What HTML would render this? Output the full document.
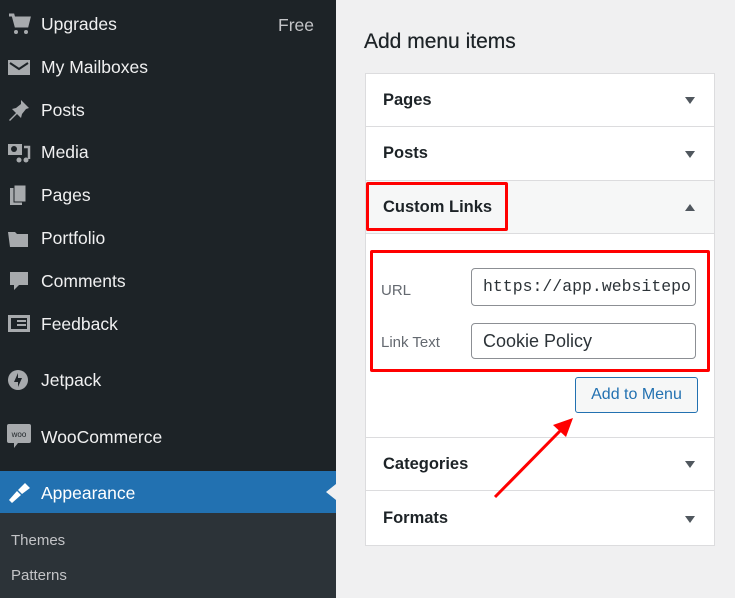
<!DOCTYPE html>
<html><head><meta charset="utf-8"><style>
*{margin:0;padding:0;box-sizing:border-box}
body{width:735px;height:598px;overflow:hidden;background:#f0f0f1;font-family:"Liberation Sans",sans-serif;position:relative}
#side{position:absolute;left:0;top:0;width:336px;height:598px;background:#1d2327}
.it{position:absolute;left:41px;color:#f0f0f1;font-size:17.5px;line-height:20px}
.ic{position:absolute;left:7px;width:24px;height:22px}
#app{position:absolute;left:0;top:471px;width:336px;height:42px;background:#2271b1}
#sub{position:absolute;left:0;top:513px;width:336px;height:85px;background:#2c3338}
.sb{position:absolute;left:11px;color:#c3c4c7;font-size:15px}
h2{position:absolute;left:364px;top:30px;font-size:21px;font-weight:normal;color:#1d2327;text-shadow:0 0 0.4px #1d2327}
#panel{position:absolute;left:365px;top:73px;width:350px;height:473px;background:#fff;border:1px solid #dcdcde}
.row{position:absolute;left:0;width:348px;border-bottom:1px solid #dcdcde;font-size:16.5px;font-weight:bold;color:#1d2327;padding-left:17px}
.row span.ar{position:absolute;right:19px;top:50%;margin-top:-3px;border-left:5px solid transparent;border-right:5px solid transparent;border-top:7px solid #50575e}
.lbl{position:absolute;left:381px;font-size:15px;color:#646970}
.inp{position:absolute;left:471px;width:225px;border:1px solid #8c8f94;border-radius:4px;background:#fff;padding-left:11px;font-size:18px;color:#2c3338}
.red{position:absolute;border:3px solid #f00;border-radius:2px}
</style></head><body>
<div id="side">
<svg class="ic" style="top:13px" viewBox="0 0 24 22"><path d="M2 2h4l3 11h11l2-8H7" fill="none" stroke="#a7aaad" stroke-width="3"/><rect x="8" y="5" width="13" height="8" fill="#a7aaad"/><circle cx="9" cy="19" r="2" fill="#a7aaad"/><circle cx="19" cy="19" r="2" fill="#a7aaad"/></svg>
<div class="it" style="top:14px">Upgrades</div><div class="it" style="left:278px;top:15px;color:#c3c4c7">Free</div>
<svg class="ic" style="top:57px" viewBox="0 0 24 22"><rect x="1" y="3" width="22" height="15" fill="#a7aaad"/><path d="M3 6l9 6 9-6" fill="none" stroke="#1d2327" stroke-width="2"/></svg>
<div class="it" style="top:57px">My Mailboxes</div>
<svg class="ic" style="top:99px" viewBox="0 0 24 22"><path d="M14 1l8 8-3 1-4 5-1 4-4-4-7 7-1-1 7-7-4-4 4-1 5-4z" fill="#a7aaad"/></svg>
<div class="it" style="top:100px">Posts</div>
<svg class="ic" style="top:141px" viewBox="0 0 24 22"><rect x="1" y="3" width="14" height="11" fill="#a7aaad"/><circle cx="7" cy="8" r="3" fill="#1d2327"/><path d="M17 6h5v12" fill="none" stroke="#a7aaad" stroke-width="2.5"/><circle cx="19" cy="19" r="2.5" fill="#a7aaad"/><circle cx="12" cy="19" r="2.5" fill="#a7aaad"/></svg>
<div class="it" style="top:142px">Media</div>
<svg class="ic" style="top:184px" viewBox="0 0 24 22"><rect x="3" y="4" width="12" height="17" fill="#a7aaad"/><rect x="7" y="1" width="12" height="17" fill="#a7aaad" stroke="#1d2327"/></svg>
<div class="it" style="top:185px">Pages</div>
<svg class="ic" style="top:227px" viewBox="0 0 24 22"><path d="M1 5h7l2 2h11v13H3z" fill="#a7aaad"/></svg>
<div class="it" style="top:228px">Portfolio</div>
<svg class="ic" style="top:270px" viewBox="0 0 24 22"><path d="M3 2h18v13H12l-5 5v-5H3z" fill="#a7aaad"/></svg>
<div class="it" style="top:271px">Comments</div>
<svg class="ic" style="top:313px" viewBox="0 0 24 22"><rect x="1" y="2" width="22" height="17" fill="#a7aaad"/><rect x="4" y="5" width="16" height="11" fill="#1d2327"/><rect x="10" y="7" width="9" height="2" fill="#a7aaad"/><rect x="10" y="11" width="9" height="2" fill="#a7aaad"/></svg>
<div class="it" style="top:314px">Feedback</div>
<svg class="ic" style="top:369px" viewBox="0 0 24 22"><circle cx="11" cy="11" r="10" fill="#a7aaad"/><path d="M11 4l-4 9h4zM11 18l4-9h-4z" fill="#1d2327"/></svg>
<div class="it" style="top:370px">Jetpack</div>
<svg class="ic" style="top:424px;height:26px" viewBox="0 0 24 26"><rect x="0" y="0" width="24" height="19" rx="2" fill="#a7aaad"/><path d="M7 19v5l4-5z" fill="#a7aaad"/><text x="12" y="13" font-size="8" text-anchor="middle" fill="#1d2327" font-family="Liberation Sans">woo</text></svg>
<div class="it" style="top:427px">WooCommerce</div>
</div>
<div id="app"></div>
<svg class="ic" style="top:482px" viewBox="0 0 24 22"><path d="M2 18l8-9 4 4-9 8z M11 8l7-7 5 5-8 6z" fill="#fff"/></svg>
<div class="it" style="top:483px;color:#fff">Appearance</div>
<div style="position:absolute;left:326px;top:484px;border-top:8px solid transparent;border-bottom:8px solid transparent;border-right:10px solid #f0f0f1"></div>
<div id="sub"></div>
<div class="sb" style="top:532px">Themes</div>
<div class="sb" style="top:567px">Patterns</div>

<h2>Add menu items</h2>
<div id="panel">
<div class="row" style="top:0;height:53px;line-height:52px">Pages<span class="ar"></span></div>
<div class="row" style="top:53px;height:54px;line-height:53px">Posts<span class="ar"></span></div>
<div class="row" style="top:107px;height:53px;line-height:52px;background:#f6f7f7">Custom Links<span class="ar" style="border-top:0;border-bottom:7px solid #50575e"></span></div>
<div class="row" style="top:363px;height:54px;line-height:53px;border-top:1px solid #dcdcde">Categories<span class="ar"></span></div>
<div class="row" style="top:417px;height:55px;line-height:54px;border-bottom:0">Formats<span class="ar"></span></div>
</div>
<div class="lbl" style="top:282px">URL</div>
<div class="lbl" style="top:334px">Link Text</div>
<div class="inp" style="top:268px;height:38px;line-height:36px;font-family:'Liberation Mono',monospace;font-size:16.5px;overflow:hidden;white-space:nowrap">https://app.websitepo</div>
<div class="inp" style="top:323px;height:36px;line-height:34px">Cookie Policy</div>
<div style="position:absolute;left:575px;top:377px;width:123px;height:36px;border:1px solid #2271b1;border-radius:3px;background:#f6f7f7;color:#2271b1;font-size:16px;text-align:center;line-height:34px">Add to Menu</div>
<div class="red" style="left:366px;top:182px;width:142px;height:49px"></div>
<div class="red" style="left:370px;top:250px;width:340px;height:122px"></div>
<svg style="position:absolute;left:0;top:0" width="735" height="598"><line x1="495" y1="497" x2="560" y2="431" stroke="#f00" stroke-width="3"/><path d="M573 418l-20 7 13 12z" fill="#f00"/></svg>
</body></html>
